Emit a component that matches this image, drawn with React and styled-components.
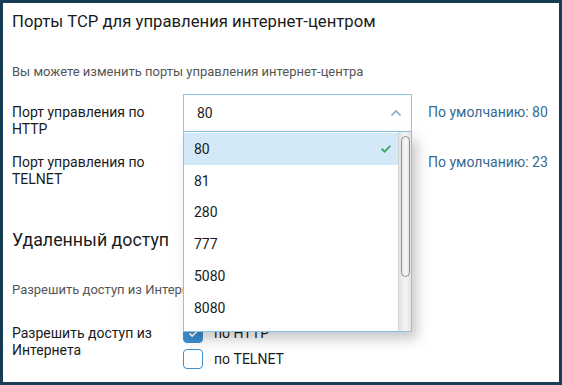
import React from 'react'
import styled, { createGlobalStyle } from 'styled-components';

const Global = createGlobalStyle`
  html, body {
    margin: 0;
    padding: 0;
    background: #fff;
  }
  body {
    font-family: Roboto, "Liberation Sans", sans-serif;
    color: #1b1b1b;
  }
`;

const Frame = styled.div`
  box-sizing: border-box;
  width: 562px;
  height: 385px;
  border: 3px solid #173d55;
  background: #fff;
  overflow: hidden;
  padding: 8px 9px 0 9px;
`;

const Title = styled.h2`
  margin: 0;
  font-size: 16.7px;
  line-height: 22px;
  font-weight: 400;
  color: #1b1b1b;
`;

const Note = styled.p`
  margin: ${p => p.$top}px 0 0 0;
  font-size: 13px;
  line-height: 18px;
  color: #555;
`;

const Row = styled.div`
  display: grid;
  grid-template-columns: 171px 229px auto;
  align-items: start;
  margin-top: ${p => p.$top}px;
`;

const Label = styled.div`
  font-size: 14px;
  line-height: 17px;
  padding-top: ${p => p.$pad ?? 10}px;
  padding-right: 20px;
  color: #1b1b1b;
`;

const Hint = styled.div`
  font-size: 14px;
  line-height: 17px;
  padding: 10px 0 0 16px;
  color: #336b93;
  white-space: nowrap;
`;

const SelectWrap = styled.div`
  position: relative;
`;

const SelectBox = styled.div`
  box-sizing: border-box;
  height: 38px;
  border: 1px solid ${p => (p.$open ? '#8cc3e8' : '#b9d3e6')};
  display: flex;
  align-items: center;
  justify-content: space-between;
  padding: 0 9px 0 13px;
  font-size: 14px;
  color: #1b1b1b;
  background: #fff;
`;

const Menu = styled.div`
  position: absolute;
  top: 38px;
  left: 0;
  right: 0;
  z-index: 5;
  box-sizing: border-box;
  height: 200px;
  display: flex;
  background: #fff;
  border: 1px solid #8cc3e8;
  border-top: none;
  box-shadow: 5px 7px 12px rgba(0, 0, 0, 0.22);
  overflow: hidden;
`;

const Options = styled.ul`
  flex: 1;
  margin: 0;
  padding: 1px 0 0 0;
  list-style: none;
  overflow: hidden;
`;

const Option = styled.li`
  height: 31.8px;
  display: flex;
  align-items: center;
  justify-content: space-between;
  padding: 0 6px 0 10px;
  font-size: 14px;
  color: #1b1b1b;
  background: ${p => (p.$active ? '#d3e9f7' : '#fff')};
`;

const Track = styled.div`
  width: 13px;
  flex: none;
  box-sizing: border-box;
  border-left: 1px solid #d4d4d4;
  background: linear-gradient(to right, #e2e2e2, #f3f3f3 55%, #e4e4e4);
  padding: 4px 1px 0 2px;
`;

const Thumb = styled.div`
  box-sizing: border-box;
  height: 141px;
  border: 1px solid #8e8e8e;
  border-radius: 6px;
  background: linear-gradient(to right, #e9e9e9, #f7f7f7 60%, #e2e2e2);
`;

const Checks = styled.div`
  display: flex;
  flex-direction: column;
  gap: 6px;
`;

const CheckRow = styled.label`
  display: flex;
  align-items: center;
  gap: 11px;
  font-size: 14px;
  color: #1b1b1b;
`;

const Box = styled.span`
  box-sizing: border-box;
  width: 20px;
  height: 20px;
  border-radius: 4px;
  border: 1px solid #3b8fd2;
  background: ${p => (p.$checked ? '#3b8fd2' : '#fff')};
  display: flex;
  align-items: center;
  justify-content: center;
`;

const Heading = styled.h3`
  margin: 40px 0 0 0;
  font-size: 17.8px;
  line-height: 24px;
  font-weight: 400;
  color: #1b1b1b;
`;

const Chevron = () => (
  <svg width="12" height="8" viewBox="0 0 12 8">
    <path d="M1.5 6.5 L6 2 L10.5 6.5" fill="none" stroke="#8aa8c6" strokeWidth="1.6" />
  </svg>
);

const Tick = ({ color = '#3aaa66', size = 12 }) => (
  <svg width={size} height={size * 0.8} viewBox="0 0 12 10">
    <path d="M1.5 5 L4.5 8 L10.5 2" fill="none" stroke={color} strokeWidth="2" />
  </svg>
);

const ports = ['80', '81', '280', '777', '5080', '8080', '8090', '8888', '9090'];

export default function App() {
  return (
    <>
      <Global />
      <Frame>
        <Title>Порты TCP для управления интернет-центром</Title>
        <Note $top={30}>Вы можете изменить порты управления интернет-центра</Note>

        <Row $top={13}>
          <Label>Порт управления по HTTP</Label>
          <SelectWrap>
            <SelectBox $open>
              <span>80</span>
              <Chevron />
            </SelectBox>
            <Menu>
              <Options>
                {ports.map(p => (
                  <Option key={p} $active={p === '80'}>
                    <span>{p}</span>
                    {p === '80' && <Tick />}
                  </Option>
                ))}
              </Options>
              <Track>
                <Thumb />
              </Track>
            </Menu>
          </SelectWrap>
          <Hint>По умолчанию: 80</Hint>
        </Row>

        <Row $top={6}>
          <Label>Порт управления по TELNET</Label>
          <SelectWrap>
            <SelectBox>
              <span>23</span>
              <Chevron />
            </SelectBox>
          </SelectWrap>
          <Hint>По умолчанию: 23</Hint>
        </Row>

        <Heading>Удаленный доступ</Heading>
        <Note $top={29}>Разрешить доступ из Интернета</Note>

        <Row $top={24}>
          <Label $pad={2}>Разрешить доступ из Интернета</Label>
          <Checks>
            <CheckRow>
              <Box $checked><Tick color="#fff" size={11} /></Box>
              по HTTP
            </CheckRow>
            <CheckRow>
              <Box />
              по TELNET
            </CheckRow>
          </Checks>
        </Row>
      </Frame>
    </>
  );
}
